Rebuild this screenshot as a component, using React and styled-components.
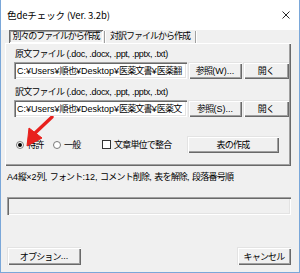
import React from 'react';
import styled, { createGlobalStyle } from 'styled-components';

const GlobalStyle = createGlobalStyle`
  html, body {
    margin: 0;
    padding: 0;
    background: #ffffff;
  }
  * {
    box-sizing: border-box;
  }
`;

const FONT = `"Liberation Sans", "Noto Sans CJK JP", sans-serif`;

// CJK runs are tightened a little so they sit like the dialog font
const Cjk = styled.span`
  letter-spacing: ${p => p.$ls ?? -0.8}px;
`;

const CJK_RE = /([\u3000-\u30ff\u4e00-\u9fff\uff00-\uffef]+)/;

const Jp = ({ children, ls }) =>
  String(children)
    .split(CJK_RE)
    .map((s, i) => (i % 2 ? <Cjk key={i} $ls={ls}>{s}</Cjk> : s));

// Window frame
const Window = styled.div`
  width: 300px;
  height: 273px;
  display: flex;
  flex-direction: column;
  border: 1px solid #7aa7d9;
  border-top: none;
  background: #f0f0f0;
  font-family: ${FONT};
  font-size: 9px;
  color: #000;
  overflow: hidden;
`;

const TitleBar = styled.div`
  height: 30px;
  flex: none;
  display: flex;
  align-items: center;
  justify-content: space-between;
  background: #ffffff;
  padding: 0 9px 0 6px;
`;

const Title = styled.div`
  font-family: "Noto Sans CJK JP", sans-serif;
  font-size: 9.5px;
  letter-spacing: -0.1px;
`;

const Client = styled.div`
  flex: 1;
  display: flex;
  flex-direction: column;
`;

// Tabs (flat button style)
const TabStrip = styled.div`
  display: flex;
  align-items: stretch;
  height: 13px;
  margin: 0 0 0 8px;
`;

const Tab = styled.div`
  display: flex;
  align-items: center;
  justify-content: ${p => (p.$active ? 'center' : 'flex-start')};
  padding-left: ${p => (p.$active ? 0 : 3)}px;
  width: ${p => p.$w}px;
  line-height: 1;
  white-space: nowrap;
  box-shadow: ${p => p.$active
    ? 'inset 1px 1px #696969, inset -1px -1px #ffffff, inset 2px 2px #a0a0a0'
    : 'none'};
`;

const TabSep = styled.div`
  width: 2px;
  margin: 1px 1px 0 1px;
  border-left: 1px solid #a0a0a0;
  border-right: 1px solid #ffffff;
`;

// Panel
const Panel = styled.div`
  position: relative;
  margin: 0 8px 0 4px;
  height: 123px;
  display: flex;
  flex-direction: column;
  padding: 5px 2px 0 9px;
  box-shadow: inset 1px 1px #ffffff, inset -1px -1px #696969, inset -2px -2px #a0a0a0;
`;

const FieldLabel = styled.div`
  height: 12px;
  line-height: 12px;
  padding-left: 1px;
  margin-top: ${p => p.$mt || 0}px;
  letter-spacing: -0.3px;
  white-space: nowrap;
`;

const FileRow = styled.div`
  display: flex;
  height: 17px;
  margin-top: 2px;
`;

const PathBox = styled.div`
  width: 173px;
  flex: none;
  background: #ffffff;
  display: flex;
  align-items: center;
  padding: 0 2px 0 3px;
  white-space: nowrap;
  overflow: hidden;
  box-shadow: inset 1px 1px #a0a0a0, inset 2px 2px #696969, inset -1px -1px #ffffff, inset -2px -2px #e3e3e3;
`;

const Button = styled.div`
  width: ${p => p.$w}px;
  height: ${p => p.$h || 17}px;
  flex: none;
  margin-left: ${p => p.$ml || 0}px;
  display: flex;
  align-items: center;
  justify-content: center;
  background: #f0f0f0;
  white-space: nowrap;
  box-shadow: inset 1px 1px #e3e3e3, inset 2px 2px #ffffff, inset -1px -1px #696969, inset -2px -2px #a0a0a0;
`;

const OptionRow = styled.div`
  display: flex;
  align-items: center;
  height: 17px;
  margin-top: 19px;
  padding-left: 2px;
`;

const Choice = styled.label`
  display: flex;
  align-items: center;
  gap: ${p => p.$gap || 3}px;
  width: ${p => p.$w}px;
  flex: none;
  white-space: nowrap;
`;

const Radio = styled.span`
  width: 8px;
  height: 8px;
  border-radius: 50%;
  background: #ffffff;
  border: 1px solid #7a7a7a;
  display: flex;
  align-items: center;
  justify-content: center;
  &::after {
    content: '';
    width: 4px;
    height: 4px;
    border-radius: 50%;
    background: ${p => (p.$on ? '#000' : 'transparent')};
  }
`;

const Check = styled.span`
  width: 9px;
  height: 9px;
  background: #ffffff;
  border: 1px solid #333;
`;

const Arrow = styled.svg`
  position: absolute;
  left: 10px;
  top: 73px;
`;

const Summary = styled.div`
  margin: 5px 0 0 6px;
  height: 12px;
  line-height: 12px;
  white-space: nowrap;
`;

const Progress = styled.div`
  margin: 14px 8px 0 6px;
  height: 18px;
  box-shadow: inset 1px 1px #a0a0a0, inset 2px 2px #696969, inset -1px -1px #ffffff, inset -2px -2px #e3e3e3;
`;

const Footer = styled.div`
  display: flex;
  justify-content: space-between;
  margin: 32px 8px 0 6px;
`;

const CloseIcon = () => (
  <svg width="8" height="8" viewBox="0 0 8 8">
    <path d="M0.5 0.5 L7.5 7.5 M7.5 0.5 L0.5 7.5" stroke="#111" strokeWidth="0.9" />
  </svg>
);

export default function App() {
  return (
    <>
      <GlobalStyle />
      <Window>
        <TitleBar>
          <Title>色deチェック (Ver. 3.2b)</Title>
          <CloseIcon />
        </TitleBar>
        <Client>
          <TabStrip>
            <Tab $w={94} $active><Jp ls={-1.1}>別々のファイルから作成</Jp></Tab>
            <TabSep />
            <Tab $w={87}><Jp ls={-1}>対訳ファイルから作成</Jp></Tab>
            <TabSep />
          </TabStrip>
          <Panel>
            <FieldLabel><Jp>原文ファイル (.doc, .docx, .ppt, .pptx, .txt)</Jp></FieldLabel>
            <FileRow>
              <PathBox><Jp>C:¥Users¥順也¥Desktop¥医薬文書¥医薬翻</Jp></PathBox>
              <Button $w={54} $ml={1}><Jp>参照(W)...</Jp></Button>
              <Button $w={46} $ml={1}><Jp>開く</Jp></Button>
            </FileRow>
            <FieldLabel $mt={7}><Jp>訳文ファイル (.doc, .docx, .ppt, .pptx, .txt)</Jp></FieldLabel>
            <FileRow>
              <PathBox><Jp>C:¥Users¥順也¥Desktop¥医薬文書¥医薬文</Jp></PathBox>
              <Button $w={54} $ml={1}><Jp>参照(S)...</Jp></Button>
              <Button $w={46} $ml={1}><Jp>開く</Jp></Button>
            </FileRow>
            <OptionRow>
              <Choice $w={37}><Radio $on /><Jp>特許</Jp></Choice>
              <Choice $w={49}><Radio /><Jp>一般</Jp></Choice>
              <Choice $w={85}><Check /><Jp>文章単位で整合</Jp></Choice>
              <Button $w={92}><Jp>表の作成</Jp></Button>
            </OptionRow>
            <Arrow width="44" height="35" viewBox="0 0 44 35">
              <path d="M37 1 L19 18" stroke="#e8211d" strokeWidth="3.4" strokeLinecap="round" />
              <path d="M12 30 L14 12 L27 22 Z" fill="#e8211d" stroke="#e8211d" strokeWidth="1" strokeLinejoin="round" />
            </Arrow>
          </Panel>
          <Summary><Jp>A4縦×2列, フォント:12, コメント削除, 表を解除, 段落番号順</Jp></Summary>
          <Progress />
          <Footer>
            <Button $w={74} $h={18}><Jp>オプション...</Jp></Button>
            <Button $w={54} $h={18}><Jp>キャンセル</Jp></Button>
          </Footer>
        </Client>
      </Window>
    </>
  );
}
